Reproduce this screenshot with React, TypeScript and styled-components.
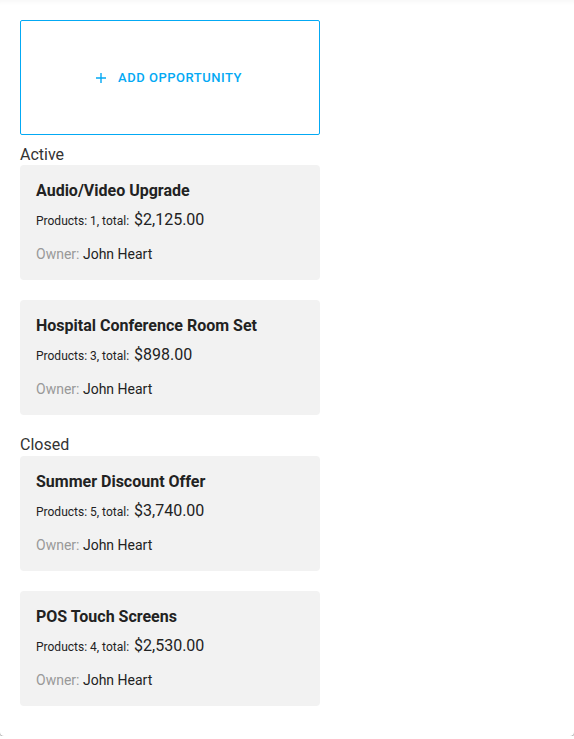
import React from "react";
import styled, { createGlobalStyle } from "styled-components";

const Global = createGlobalStyle`
  html, body { margin: 0; padding: 0; background: #fff; }
  body { font-family: Roboto, "Noto Sans", Arial, sans-serif; color: #333; }
`;

const Panel = styled.div`
  width: 574px;
  box-sizing: border-box;
  background: #fff;
  border-radius: 0 0 4px 4px;
  box-shadow: inset 0 5px 4px -3px rgba(0, 0, 0, 0.035), 0 1px 1px rgba(0, 0, 0, 0.35),
    0 1px 3px rgba(0, 0, 0, 0.12);
  padding: 20px 20px 30px;
  height: 736px;
`;

const Column = styled.div`
  width: 300px;
  display: flex;
  flex-direction: column;
`;

const AddButton = styled.button`
  width: 300px;
  height: 115px;
  box-sizing: border-box;
  border: 1px solid #03a9f4;
  border-radius: 2px;
  background: #fff;
  color: #03a9f4;
  display: flex;
  align-items: center;
  justify-content: center;
  gap: 12px;
  font-family: Roboto, Arial, sans-serif;
  font-size: 13px;
  font-weight: 500;
  letter-spacing: 0.04em;
  text-transform: uppercase;
  padding: 0 2px 0 0;
  cursor: pointer;
`;

const GroupLabel = styled.div<{ first?: boolean }>`
  font-size: 16px;
  line-height: 19px;
  color: #333;
  margin-top: ${(p) => (p.first ? "10px" : "20px")};
  margin-bottom: ${(p) => (p.first ? "1px" : "2px")};
`;

const Card = styled.div`
  background: #f2f2f2;
  border-radius: 4px;
  height: 115px;
  box-sizing: border-box;
  padding: 16px 16px;
  margin-bottom: 20px;
  &:last-child { margin-bottom: 0; }
`;

const Title = styled.div`
  font-size: 16px;
  font-weight: 700;
  line-height: 19px;
  color: #222;
`;

const Products = styled.div`
  margin-top: 10px;
  font-size: 12px;
  line-height: 19px;
  color: #222;
`;

const Price = styled.span`
  font-size: 16px;
  margin-left: 2px;
`;

const Owner = styled.div`
  margin-top: 15px;
  font-size: 14px;
  line-height: 16px;
  color: #222;
`;

const OwnerLabel = styled.span`
  color: #999;
`;

const Group = styled.div`
  display: flex;
  flex-direction: column;
`;

type Opp = { name: string; products: number; total: string; owner: string };

const active: Opp[] = [
  { name: "Audio/Video Upgrade", products: 1, total: "$2,125.00", owner: "John Heart" },
  { name: "Hospital Conference Room Set", products: 3, total: "$898.00", owner: "John Heart" },
];
const closed: Opp[] = [
  { name: "Summer Discount Offer", products: 5, total: "$3,740.00", owner: "John Heart" },
  { name: "POS Touch Screens", products: 4, total: "$2,530.00", owner: "John Heart" },
];

const OppCard = ({ o }: { o: Opp }) => (
  <Card>
    <Title>{o.name}</Title>
    <Products>
      Products: {o.products}, total: <Price>{o.total}</Price>
    </Products>
    <Owner>
      <OwnerLabel>Owner:</OwnerLabel> {o.owner}
    </Owner>
  </Card>
);

const PlusIcon = () => (
  <svg width="10" height="10" viewBox="0 0 10 10" fill="none">
    <path d="M5 0v10M0 5h10" stroke="#03a9f4" strokeWidth="1.4" />
  </svg>
);

export default function App() {
  return (
    <>
      <Global />
      <Panel>
        <Column>
          <AddButton>
            <PlusIcon />
            <span>Add Opportunity</span>
          </AddButton>
          <GroupLabel first>Active</GroupLabel>
          <Group>
            {active.map((o) => (
              <OppCard key={o.name} o={o} />
            ))}
          </Group>
          <GroupLabel>Closed</GroupLabel>
          <Group>
            {closed.map((o) => (
              <OppCard key={o.name} o={o} />
            ))}
          </Group>
        </Column>
      </Panel>
    </>
  );
}
